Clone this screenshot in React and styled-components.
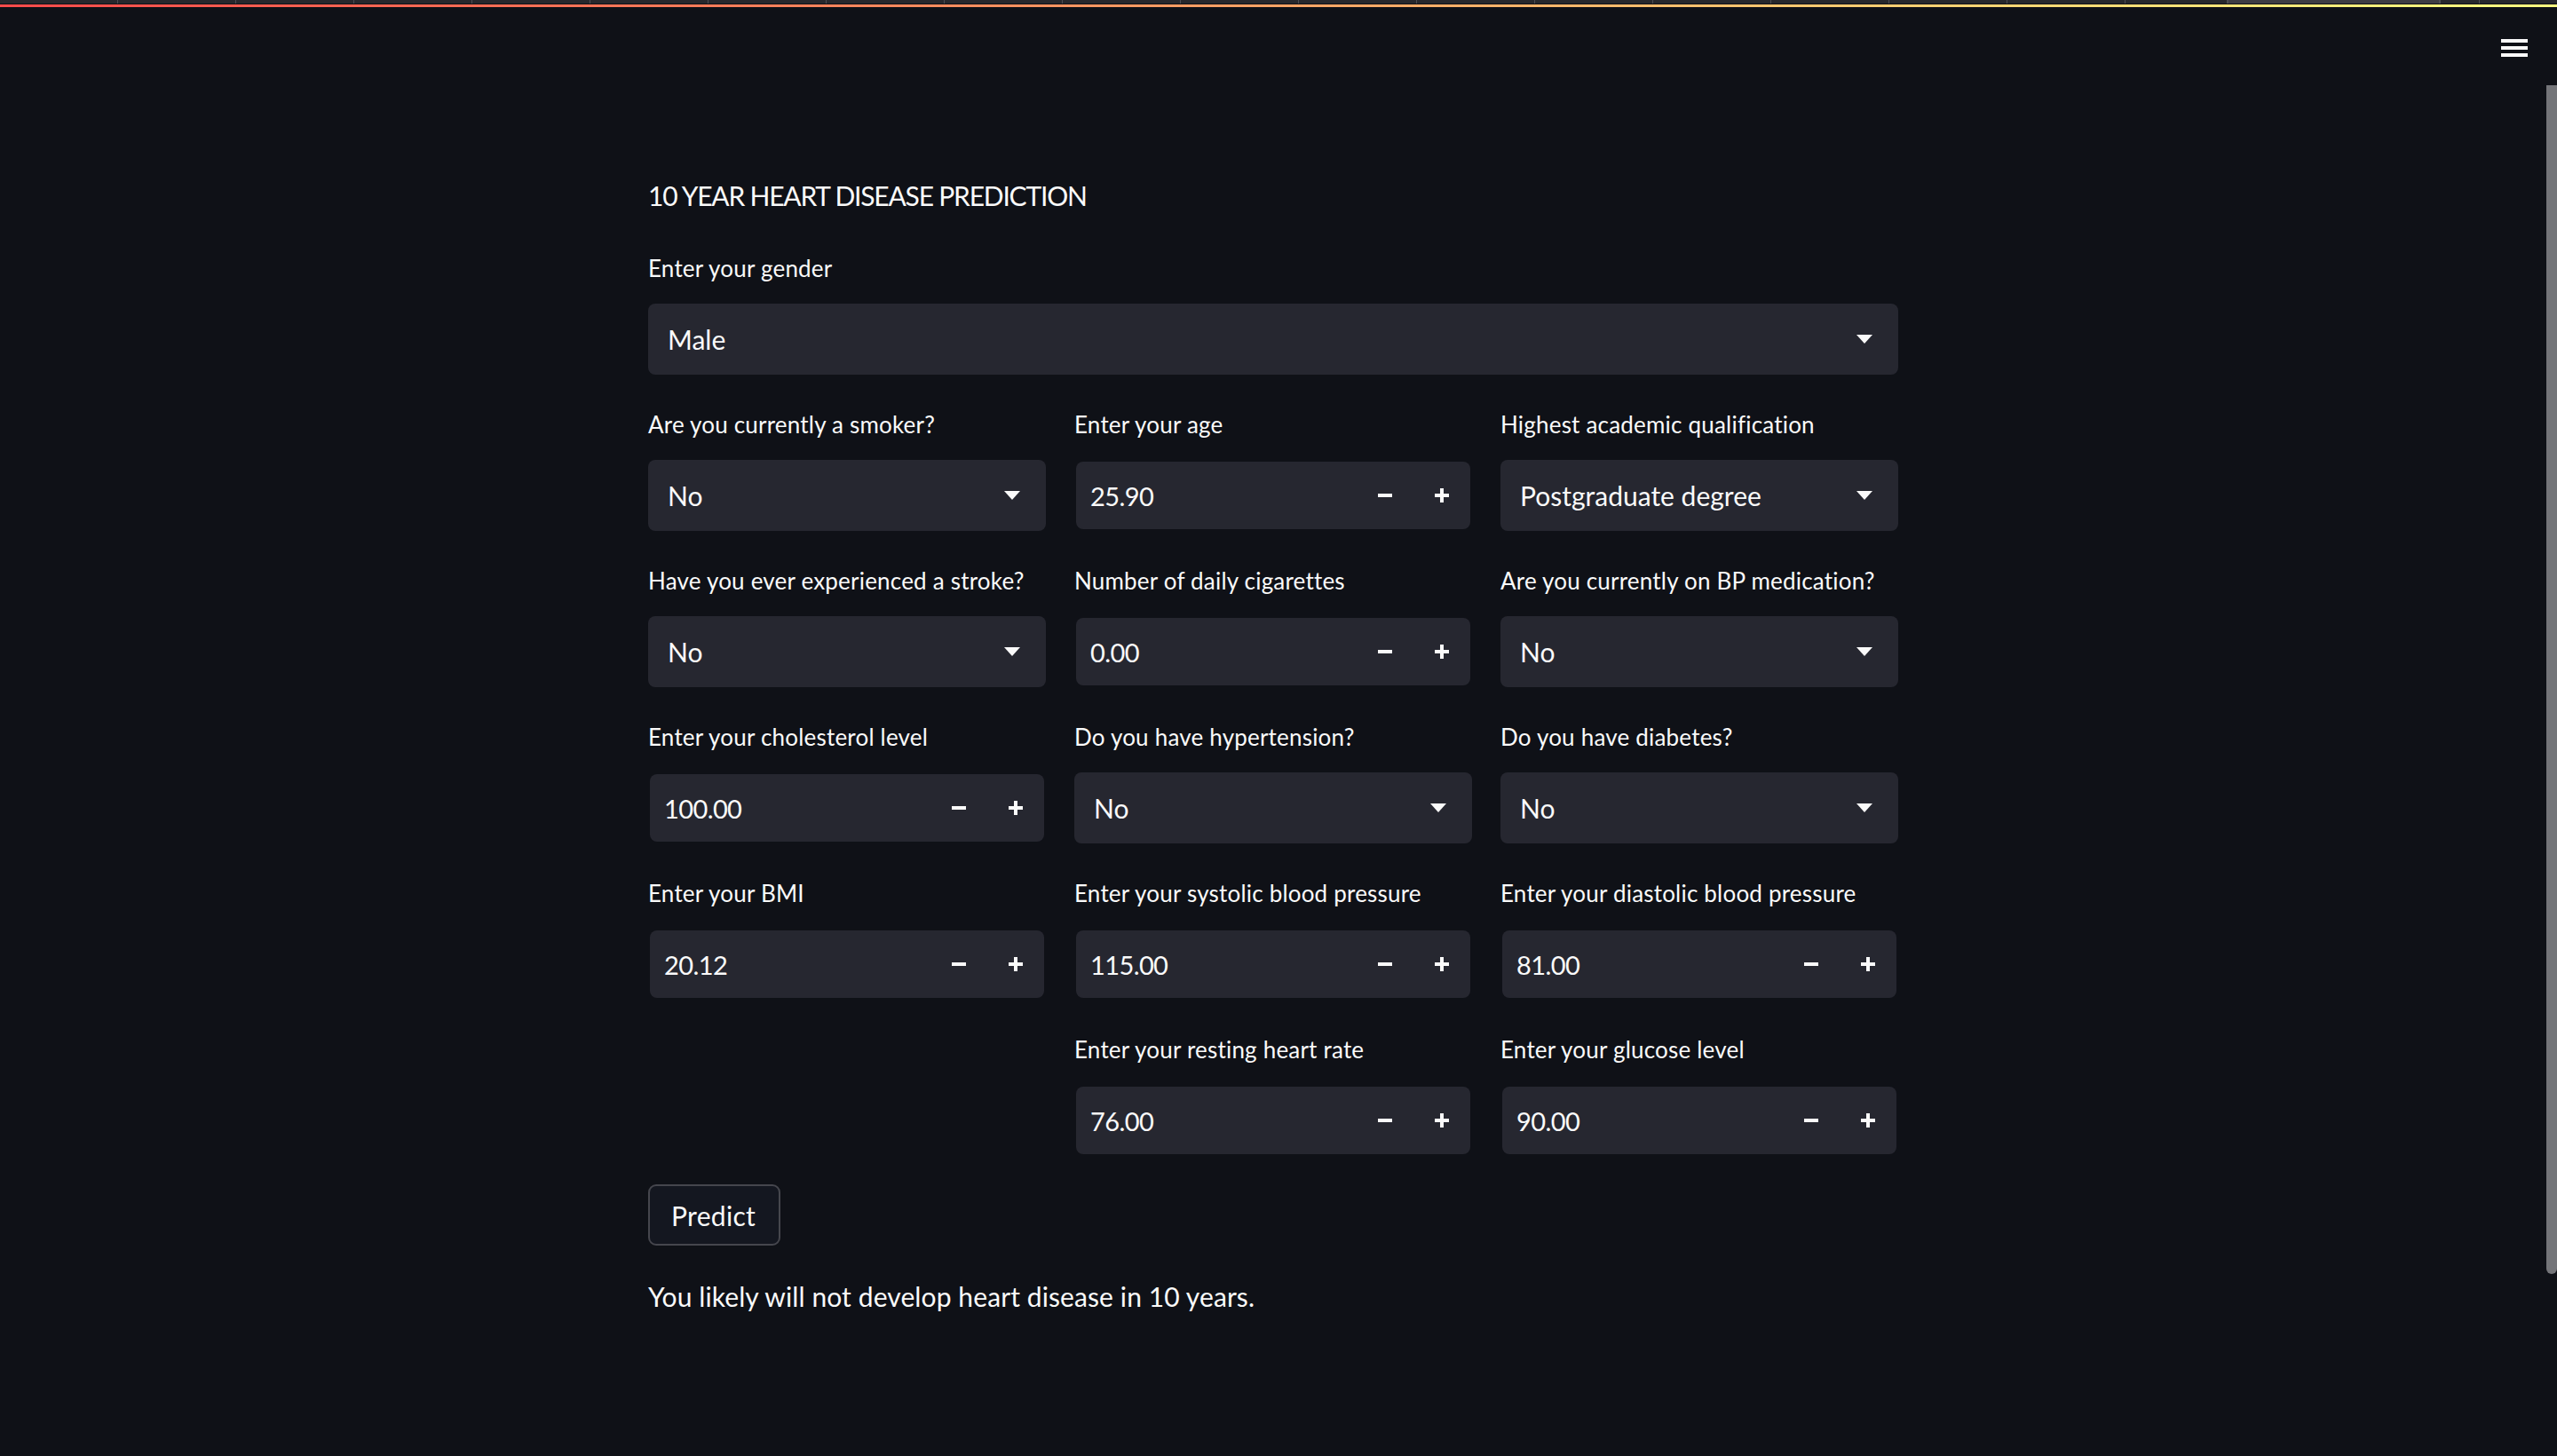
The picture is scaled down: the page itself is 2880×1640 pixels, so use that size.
import React from "react";
import styled, { createGlobalStyle } from "styled-components";

const GlobalStyle = createGlobalStyle`
  html, body {
    margin: 0;
    padding: 0;
    background: #0f1117;
    color: #fafafa;
    font-family: "Lato", "Noto Sans", sans-serif;
  }
  * { box-sizing: border-box; }
`;

const Page = styled.div`
  width: 2880px;
  height: 1640px;
  overflow: hidden;
  display: flex;
  flex-direction: column;
  background: #0f1117;
`;

const TabStrip = styled.div`
  height: 4px;
  display: flex;
  background-color: #27282d;
  background-image: repeating-linear-gradient(
    to right,
    transparent 0px,
    transparent 132px,
    #4d4d53 132px,
    #4d4d53 133px
  );
`;

const StripSpacer = styled.div`
  width: 2508px;
`;

const StripActive = styled.div`
  width: 241px;
  background: #3e3d44;
  border-left: 2px solid #4d4d53;
  border-right: 2px solid #4d4d53;
`;

const Decoration = styled.div`
  height: 3px;
  margin-top: 1px;
  background: linear-gradient(90deg, #ff4b4b, #fffd80);
`;

const Body = styled.div`
  flex: 1;
  display: flex;
  min-height: 0;
`;

const Main = styled.div`
  flex: 1;
  display: flex;
  flex-direction: column;
`;

const Header = styled.header`
  height: 92px;
  display: flex;
  justify-content: flex-end;
  align-items: flex-start;
  padding: 36px 21px 0 0;
`;

const MenuButton = styled.div`
  width: 30px;
  display: flex;
  flex-direction: column;
  gap: 4px;
`;

const MenuBar = styled.span`
  display: block;
  height: 4px;
  background: #fafafa;
`;

const Content = styled.main`
  width: 1408px;
  margin: 0 auto;
  padding-top: 95px;
  display: flex;
  flex-direction: column;
  gap: 32px;
`;

const Title = styled.p`
  margin: 0;
  font-size: 30px;
  line-height: 51px;
  letter-spacing: -1.2px;
`;

const Columns = styled.div`
  display: grid;
  grid-template-columns: repeat(3, 1fr);
  column-gap: 32px;
  align-items: start;
`;

const Column = styled.div`
  display: flex;
  flex-direction: column;
  gap: 32px;
`;

const Field = styled.div`
  display: flex;
  flex-direction: column;
`;

const Label = styled.label`
  height: 48px;
  margin-bottom: 16px;
  display: flex;
  align-items: center;
  font-size: 26px;
  letter-spacing: 0.2px;
`;

const SelectBox = styled.div`
  height: 80px;
  border-radius: 8px;
  background: #262730;
  display: flex;
  align-items: center;
  padding: 0 29px 0 22px;
  font-size: 30px;
  letter-spacing: 0;
`;

const Value = styled.span`
  flex: 1;
`;

const NumberBox = styled.div`
  height: 80px;
  border: 2px solid transparent;
  background: #262730;
  background-clip: padding-box;
  border-radius: 10px;
  display: flex;
  align-items: center;
  padding-left: 16px;
  font-size: 29px;
  letter-spacing: -0.6px;
`;

const StepButton = styled.div`
  width: 64px;
  height: 100%;
  display: flex;
  align-items: center;
  justify-content: center;
`;

const PredictButton = styled.button`
  align-self: flex-start;
  height: 69px;
  padding: 0 26px 0 24px;
  border: 2px solid #45464d;
  border-radius: 9px;
  background: #141720;
  color: #fafafa;
  font-family: inherit;
  font-size: 30px;
  letter-spacing: 0.3px;
`;

const Result = styled.p`
  margin: 0;
  font-size: 30px;
  line-height: 51px;
  letter-spacing: 0.1px;
`;

const ScrollTrack = styled.div`
  width: 12px;
  padding-top: 88px;
`;

const ScrollThumb = styled.div`
  height: 1339px;
  background: #747579;
  border-radius: 0 0 6px 6px;
`;

const Caret = () => (
  <svg width="18" height="10" viewBox="0 0 18 10">
    <polygon points="0,0 18,0 9,10" fill="#fafafa" />
  </svg>
);

const MinusIcon = () => (
  <svg width="16" height="16" viewBox="0 0 16 16">
    <rect x="0" y="6" width="16" height="4" fill="#fafafa" />
  </svg>
);

const PlusIcon = () => (
  <svg width="16" height="16" viewBox="0 0 16 16">
    <rect x="0" y="6" width="16" height="4" fill="#fafafa" />
    <rect x="6" y="0" width="4" height="16" fill="#fafafa" />
  </svg>
);

const Select = ({ label, value }) => (
  <Field>
    <Label>{label}</Label>
    <SelectBox>
      <Value>{value}</Value>
      <Caret />
    </SelectBox>
  </Field>
);

const NumberInput = ({ label, value }) => (
  <Field>
    <Label>{label}</Label>
    <NumberBox>
      <Value>{value}</Value>
      <StepButton><MinusIcon /></StepButton>
      <StepButton><PlusIcon /></StepButton>
    </NumberBox>
  </Field>
);

const col1 = [
  { kind: "select", label: "Are you currently a smoker?", value: "No" },
  { kind: "select", label: "Have you ever experienced a stroke?", value: "No" },
  { kind: "number", label: "Enter your cholesterol level", value: "100.00" },
  { kind: "number", label: "Enter your BMI", value: "20.12" },
];
const col2 = [
  { kind: "number", label: "Enter your age", value: "25.90" },
  { kind: "number", label: "Number of daily cigarettes", value: "0.00" },
  { kind: "select", label: "Do you have hypertension?", value: "No" },
  { kind: "number", label: "Enter your systolic blood pressure", value: "115.00" },
  { kind: "number", label: "Enter your resting heart rate", value: "76.00" },
];
const col3 = [
  { kind: "select", label: "Highest academic qualification", value: "Postgraduate degree" },
  { kind: "select", label: "Are you currently on BP medication?", value: "No" },
  { kind: "select", label: "Do you have diabetes?", value: "No" },
  { kind: "number", label: "Enter your diastolic blood pressure", value: "81.00" },
  { kind: "number", label: "Enter your glucose level", value: "90.00" },
];

const renderField = (f) =>
  f.kind === "select" ? (
    <Select key={f.label} label={f.label} value={f.value} />
  ) : (
    <NumberInput key={f.label} label={f.label} value={f.value} />
  );

export default function App() {
  return (
    <>
      <GlobalStyle />
      <Page>
        <TabStrip>
          <StripSpacer />
          <StripActive />
        </TabStrip>
        <Decoration />
        <Body>
          <Main>
            <Header>
              <MenuButton>
                <MenuBar />
                <MenuBar />
                <MenuBar />
              </MenuButton>
            </Header>
            <Content>
              <Title>10 YEAR HEART DISEASE PREDICTION</Title>
              <Select label="Enter your gender" value="Male" />
              <Columns>
                <Column>{col1.map(renderField)}</Column>
                <Column>{col2.map(renderField)}</Column>
                <Column>{col3.map(renderField)}</Column>
              </Columns>
              <PredictButton>Predict</PredictButton>
              <Result>You likely will not develop heart disease in 10 years.</Result>
            </Content>
          </Main>
          <ScrollTrack>
            <ScrollThumb />
          </ScrollTrack>
        </Body>
      </Page>
    </>
  );
}
